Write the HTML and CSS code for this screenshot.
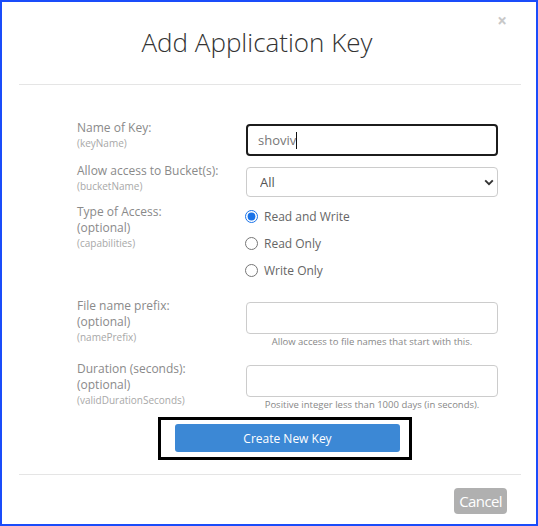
FILE: index.html
```html
<!DOCTYPE html>
<html lang="en">
<head>
<meta charset="utf-8">
<title>Add Application Key</title>
<link rel="stylesheet" href="styles.css">
</head>
<body>
<div class="modal">
  <button class="close" type="button" aria-label="Close">×</button>
  <header class="modal-header">
    <h1 class="title">Add Application Key</h1>
  </header>
  <form class="form">
    <div class="row r1">
      <label class="lbl"><span class="main">Name of Key:</span><span class="code">(keyName)</span></label>
      <div class="field">
        <div class="text-input focused" role="textbox"><span>shoviv</span><span class="caret"></span></div>
      </div>
    </div>
    <div class="row r2">
      <label class="lbl"><span class="main">Allow access to Bucket(s):</span><span class="code">(bucketName)</span></label>
      <div class="field">
        <div class="select">
          <select><option>All</option></select>
          <svg class="chev" width="10" height="7" viewBox="0 0 10 7"><path d="M1.2 1.3 L5 5.1 L8.8 1.3" fill="none" stroke="#333" stroke-width="1.9"/></svg>
        </div>
      </div>
    </div>
    <div class="row r3">
      <label class="lbl"><span class="main">Type of Access:</span><span class="main">(optional)</span><span class="code">(capabilities)</span></label>
      <div class="field radios">
        <label class="opt"><input type="radio" name="cap" checked>Read and Write</label>
        <label class="opt"><input type="radio" name="cap">Read Only</label>
        <label class="opt"><input type="radio" name="cap">Write Only</label>
      </div>
    </div>
    <div class="row r4">
      <label class="lbl"><span class="main">File name prefix:</span><span class="main">(optional)</span><span class="code">(namePrefix)</span></label>
      <div class="field">
        <input class="text-input" type="text">
        <div class="help">Allow access to file names that start with this.</div>
      </div>
    </div>
    <div class="row r5">
      <label class="lbl"><span class="main">Duration (seconds):</span><span class="main">(optional)</span><span class="code">(validDurationSeconds)</span></label>
      <div class="field">
        <input class="text-input" type="text">
        <div class="help">Positive integer less than 1000 days (in seconds).</div>
      </div>
    </div>
    <div class="highlight">
      <button class="primary" type="button">Create New Key</button>
    </div>
  </form>
  <footer class="modal-footer">
    <button class="cancel" type="button">Cancel</button>
  </footer>
</div>
</body>
</html>
```
FILE: styles.css
```css
* { box-sizing: border-box; }
html, body { margin: 0; background: #fff; }
body { font-family: "Open Sans", "Liberation Sans", sans-serif; }

.modal {
  position: relative;
  width: 538px;
  height: 526px;
  border: 2px solid #1a4cfa;
  background: #fff;
}

.close {
  position: absolute;
  top: 10px;
  right: 29px;
  border: 0;
  background: none;
  padding: 0;
  font: 700 17px/1 "Open Sans", sans-serif;
  color: #c8c8c8;
}

.modal-header {
  margin: 0 15px 0 17px;
  padding: 22px 26px 24px 0;
  border-bottom: 1px solid #e5e5e5;
}
.title {
  margin: 0;
  text-align: center;
  font: 300 26px/36px "Open Sans", sans-serif;
  color: #333;
}

.form {
  padding: 39px 0 0 75px;
}
.row {
  display: grid;
  grid-template-columns: 169px 252px;
  align-items: start;
}
.r1 { margin-bottom: 11px; }
.r2 { margin-bottom: 11px; }
.r3 { margin-bottom: 18px; }
.r4 { margin-bottom: 16px; }
.r5 { margin-bottom: 5px; }

.lbl {
  margin-top: -4px;
  display: flex;
  flex-direction: column;
}
.main { font-size: 12px; line-height: 16px; color: #8a8a8a; }
.code { font-size: 10px; line-height: 14px; color: #a8a8a8; }

.text-input {
  display: flex;
  align-items: center;
  width: 100%;
  height: 32px;
  border: 1px solid #ccc;
  border-radius: 4px;
  padding: 0 10px;
  font: 13px "Open Sans", sans-serif;
  color: #777;
  background: #fff;
  outline: none;
}
.text-input.focused {
  border: 2px solid #1c1c1c;
  padding-left: 10px;
}
.caret {
  display: inline-block;
  width: 1px;
  height: 17px;
  background: #111;
}

.select {
  position: relative;
  height: 30px;
}
.select select {
  appearance: none;
  -webkit-appearance: none;
  width: 100%;
  height: 30px;
  border: 1px solid #ccc;
  border-radius: 4px;
  background: #fff;
  padding: 0 13px;
  font: 13px "Open Sans", sans-serif;
  color: #555;
  outline: none;
}
.chev {
  position: absolute;
  right: 4px;
  top: 12px;
  pointer-events: none;
}

.radios { margin-top: -5px; display: flex; flex-direction: column; }
.opt {
  display: flex;
  align-items: center;
  height: 27px;
  font-size: 12px;
  color: #666;
}
.opt input {
  width: 13px;
  height: 13px;
  margin: 0 6px 0 -1px;
  accent-color: #1a73e8;
}

.help {
  margin-top: 1px;
  text-align: center;
  font-size: 9.5px;
  line-height: 14px;
  color: #888;
}

.highlight {
  width: 254px;
  margin-left: 81px;
  border: 3px solid #000;
  padding: 4px 9px 5px 14px;
}
.primary {
  display: block;
  width: 100%;
  height: 28px;
  border: 0;
  border-radius: 3px;
  background: #3c88d5;
  color: #fff;
  font: 12px "Open Sans", sans-serif;
}

.modal-footer {
  margin: 14px 15px 0 17px;
  padding: 13px 14px 0 0;
  border-top: 1px solid #e5e5e5;
  display: flex;
  justify-content: flex-end;
}
.cancel {
  height: 26px;
  padding: 0 5px;
  border: 0;
  border-radius: 4px;
  background: #b0b0b0;
  color: #fff;
  font: 15px "Open Sans", sans-serif;
  letter-spacing: -0.6px;
}
```
